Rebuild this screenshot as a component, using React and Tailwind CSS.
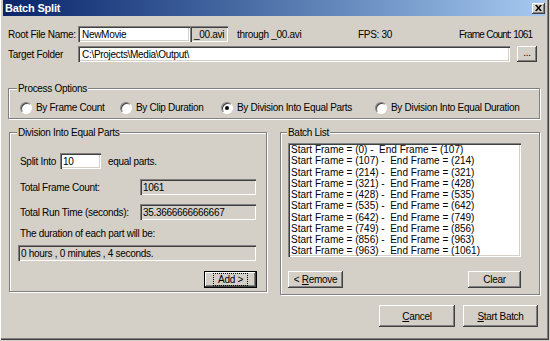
import React from 'react';

const sunken =
  'shadow-[inset_1px_1px_#808080,inset_2px_2px_#404040,inset_-1px_-1px_#ffffff,inset_-2px_-2px_#d4d0c8]';
const raised =
  'shadow-[inset_-1px_-1px_#404040,inset_1px_1px_#ffffff,inset_-2px_-2px_#808080,inset_2px_2px_#d4d0c8]';
const group =
  'border border-[#808080] shadow-[inset_1px_1px_#ffffff,1px_1px_#ffffff]';

const batchItems = [
  ['0', '107'],
  ['107', '214'],
  ['214', '321'],
  ['321', '428'],
  ['428', '535'],
  ['535', '642'],
  ['642', '749'],
  ['749', '856'],
  ['856', '963'],
  ['963', '1061'],
];

const Radio = ({ checked, label, width }) => (
  <div className="flex items-center gap-[4px] shrink-0" style={{ width }}>
    <div className="w-[12px] h-[12px] shrink-0 rounded-full bg-white border border-t-[#808080] border-l-[#808080] border-r-[#ffffff] border-b-[#ffffff] shadow-[inset_1px_1px_#404040] flex items-center justify-center">
      {checked && <div className="w-[4px] h-[4px] rounded-full bg-black" />}
    </div>
    <span>{label}</span>
  </div>
);

const Button = ({ children, className = '' }) => (
  <div className={`bg-[#d4d0c8] ${raised} flex items-center justify-center ${className}`}>
    {children}
  </div>
);

const App = () => {
  return (
    <div className="w-[550px] h-[341px] bg-[#d4d0c8] text-black text-[10px] tracking-[-0.3px] leading-[13px] whitespace-nowrap font-[family-name:'Liberation_Sans',Arial,sans-serif] overflow-hidden">
      <div className="w-[549px] h-[340px] px-[3px] shadow-[inset_1px_0_#ffffff,inset_-1px_-1px_#404040,inset_-2px_-2px_#808080]">
        {/* Title bar */}
        <div className="h-[16px] flex items-center justify-between pl-[2px] pr-[1px] bg-gradient-to-r from-[#0a246a] to-[#a6caf0]">
          <span className="text-white font-bold text-[11px] tracking-[-0.2px]">Batch Split</span>
          <div className={`w-[13px] h-[11px] bg-[#d4d0c8] ${raised} flex items-center justify-center`}>
            <svg width="7" height="6" viewBox="0 0 7 6">
              <path d="M0 0h2l1.5 2L5 0h2L4.5 3 7 6H5L3.5 4 2 6H0l2.5-3z" fill="#000" />
            </svg>
          </div>
        </div>

        <div className="pl-[5px] flex flex-col">
          {/* Root file name row */}
          <div className="flex items-center h-[16px] mt-[10px]">
            <span className="w-[70px] shrink-0">Root File Name:</span>
            <div className={`w-[112px] h-[16px] bg-white ${sunken} pl-[4px] flex items-center shrink-0`}>
              NewMovie
            </div>
            <div className={`w-[38px] h-[16px] ${sunken} pl-[4px] flex items-center shrink-0`}>
              _00.avi
            </div>
            <span className="ml-[9px] w-[121px] shrink-0">through _00.avi</span>
            <span className="w-[101px] shrink-0">FPS: 30</span>
            <span className="tracking-[-0.75px]">Frame Count: 1061</span>
          </div>

          {/* Target folder row */}
          <div className="flex items-center h-[16px] mt-[4px]">
            <span className="w-[70px] shrink-0">Target Folder</span>
            <div className={`w-[432px] h-[16px] bg-white ${sunken} pl-[4px] flex items-center shrink-0`}>
              C:\Projects\Media\Output\
            </div>
            <Button className="ml-[7px] w-[20px] h-[16px] pb-[3px]">...</Button>
          </div>

          {/* Process options */}
          <fieldset className={`mt-[20px] w-[532px] ${group} pl-[8px] pb-[4px]`}>
            <legend className="px-[1px] bg-[#d4d0c8]">Process Options</legend>
            <div className="flex items-center h-[13px] mt-[6px] ml-[3px]">
              <Radio label="By Frame Count" width="100px" />
              <Radio label="By Clip Duration" width="101px" />
              <Radio label="By Division Into Equal Parts" width="154px" checked />
              <Radio label="By Division Into Equal Duration" width="150px" />
            </div>
          </fieldset>

          {/* Groups row */}
          <div className="flex items-start mt-[7px]">
            <fieldset className={`ml-[1px] w-[258px] ${group} pl-[7px] pr-[9px] pb-[3px]`}>
              <legend className="px-[1px] bg-[#d4d0c8]">Division Into Equal Parts</legend>
              <div className="flex flex-col">
                <div className="flex items-center h-[16px] mt-[14px] ml-[3px]">
                  <span className="w-[40px] shrink-0">Split Into</span>
                  <div className={`w-[41px] h-[16px] bg-white ${sunken} pl-[3px] flex items-center`}>10</div>
                  <span className="ml-[7px]">equal parts.</span>
                </div>
                <div className="flex items-center h-[16px] mt-[10px] ml-[3px]">
                  <span className="w-[120px] shrink-0">Total Frame Count:</span>
                  <div className={`w-[116px] h-[16px] ${sunken} pl-[3px] flex items-center`}>1061</div>
                </div>
                <div className="flex items-center h-[16px] mt-[9px] ml-[3px]">
                  <span className="w-[120px] shrink-0">Total Run Time (seconds):</span>
                  <div className={`w-[116px] h-[16px] ${sunken} pl-[3px] flex items-center`}>35.3666666666667</div>
                </div>
                <div className="mt-[7px] ml-[3px] h-[13px]">The duration of each part will be:</div>
                <div className={`mt-[5px] ml-[1px] w-[238px] h-[16px] ${sunken} pl-[3px] flex items-center`}>
                  0 hours , 0 minutes , 4 seconds.
                </div>
                <div className="flex justify-end mt-[10px]">
                  <Button className="w-[53px] h-[17px] border border-black">
                    <span className="border border-dotted border-black px-[4px] leading-[11px]">Add &gt;</span>
                  </Button>
                </div>
              </div>
            </fieldset>

            <fieldset className={`ml-[13px] w-[260px] ${group} pl-[6px] pb-[6px]`}>
              <legend className="px-[1px] bg-[#d4d0c8]">Batch List</legend>
              <div className={`mt-[4px] ml-[1px] w-[233px] h-[114px] bg-white ${sunken} pl-[3px] pt-[1px] leading-[11.25px] tracking-normal`}>
                {batchItems.map(([s, e]) => (
                  <div key={s}>
                    Start Frame = ({s}) -&nbsp; End Frame = ({e})
                  </div>
                ))}
              </div>
              <div className="flex justify-between mt-[14px] ml-[1px] w-[233px]">
                <Button className="w-[55px] h-[17px]">
                  &lt;&nbsp;<u>R</u>emove
                </Button>
                <Button className="w-[53px] h-[17px]">Clear</Button>
              </div>
            </fieldset>
          </div>

          {/* Bottom buttons */}
          <div className="flex justify-end gap-[8px] mt-[10px] w-[530px]">
            <Button className="w-[76px] h-[22px]">
              <u>C</u>ancel
            </Button>
            <Button className="w-[75px] h-[22px]">
              <u>S</u>tart Batch
            </Button>
          </div>
        </div>
      </div>
    </div>
  );
};

export default App;
